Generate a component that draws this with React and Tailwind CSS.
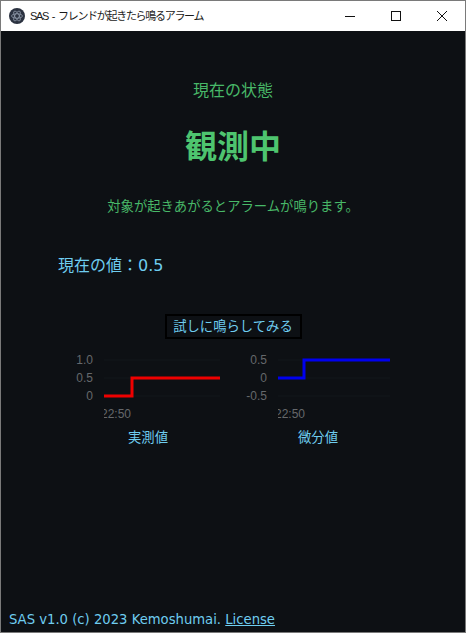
import React from "react";

const jp = "font-['DejaVu_Sans','Noto_Sans_CJK_JP',sans-serif]";

const Chart = ({ ticks, color, tickX, startX, stepX, endX, low, high, label }) => (
  <div className="w-[170px] flex flex-col items-center">
    <svg width="170" height="72" viewBox="0 0 170 72" className="block">
      <defs>
        <clipPath id={`clip-${color}`}>
          <rect x={startX} y="44" width="60" height="24" />
        </clipPath>
      </defs>
      {[0, 18, 36].map((y) => (
        <line key={y} x1={startX} x2={endX} y1={y + 9} y2={y + 9} stroke="#13161a" strokeWidth="1" />
      ))}
      {ticks.map((t, i) => (
        <text key={t} x={tickX} y={13 + i * 18} textAnchor="end" fill="#65686b" fontSize="12" fontFamily="'Liberation Sans', sans-serif">
          {t}
        </text>
      ))}
      <polyline
        points={`${startX},${low} ${stepX},${low} ${stepX},${high} ${endX},${high}`}
        fill="none"
        stroke={color}
        strokeWidth="3"
      />
      <g clipPath={`url(#clip-${color})`}>
        <text x={startX + 12} y="67" textAnchor="middle" fill="#65686b" fontSize="12" fontFamily="'Liberation Sans', sans-serif">
          22:50
        </text>
      </g>
    </svg>
    <p className="text-[13.33px] leading-[18px] mt-[6px] pl-[6px] text-[#6fcdf0]">{label}</p>
  </div>
);

export default function App() {
  return (
    <div className={`w-[466px] h-[633px] flex flex-col border border-[#7a7a7a] bg-[#0d1014] overflow-hidden ${jp}`}>
      {/* TITLE BAR */}
      <div className="h-[30px] shrink-0 bg-white flex items-center pl-[8px]">
        <svg width="16" height="16" viewBox="0 0 16 16" className="shrink-0">
          <circle cx="8" cy="8" r="8" fill="#2b3240" />
          <g fill="none" stroke="#9aa5b5" strokeWidth="0.7">
            <ellipse cx="8" cy="8" rx="5.5" ry="2.2" />
            <ellipse cx="8" cy="8" rx="5.5" ry="2.2" transform="rotate(60 8 8)" />
            <ellipse cx="8" cy="8" rx="5.5" ry="2.2" transform="rotate(120 8 8)" />
          </g>
        </svg>
        <span className="ml-[5px] text-[11px] tracking-[-1.3px] [word-spacing:2px] text-[#1a1a1a] font-['Liberation_Sans','Noto_Sans_CJK_JP',sans-serif]">
          SAS - フレンドが起きたら鳴るアラーム
        </span>
        <div className="ml-auto flex items-center h-full text-black">
          <div className="w-[46px] flex justify-center">
            <svg width="10" height="10" viewBox="0 0 10 10"><path d="M0 5.5H10" stroke="#111" /></svg>
          </div>
          <div className="w-[46px] flex justify-center">
            <svg width="10" height="10" viewBox="0 0 10 10"><rect x="0.5" y="0.5" width="9" height="9" fill="none" stroke="#111" /></svg>
          </div>
          <div className="w-[46px] flex justify-center">
            <svg width="10" height="10" viewBox="0 0 10 10"><path d="M0 0L10 10M10 0L0 10" stroke="#111" /></svg>
          </div>
        </div>
      </div>

      {/* STATUS */}
      <div className="flex-1 flex flex-col items-center pt-[48px]">
        <p className="text-[16px] leading-[24px] text-[#48b868]">現在の状態</p>
        <h1 className="mt-[24px] text-[32px] leading-[40px] font-bold text-[#4ec46f]">観測中</h1>
        <p className="mt-[30px] text-[13.33px] leading-[20px] text-[#48b868]">対象が起きあがるとアラームが鳴ります。</p>
        <p className="self-start ml-[57px] mt-[37px] text-[16px] leading-[24px] text-[#6fcdf0]">現在の値：0.5</p>

        <button className="mt-[36px] w-[137px] h-[25px] border-2 border-black bg-[#0d1014] text-[13.33px] leading-none text-[#6fcdf0]">
          試しに鳴らしてみる
        </button>

        <div className="mt-[12px] flex -translate-x-[3px]">
          <Chart ticks={["1.0", "0.5", "0"]} color="#ee0000" tickX="33" startX={44} stepX={72} endX={160} low={45} high={27} label="実測値" />
          <Chart ticks={["0.5", "0", "-0.5"]} color="#0000ee" tickX="37" startX={48} stepX={74} endX={160} low={27} high={9} label="微分値" />
        </div>
      </div>

      {/* FOOTER */}
      <p className="pl-[8px] pb-[3px] text-[13.2px] leading-[18px] text-[#6fcdf0]">
        SAS v1.0 (c) 2023 Kemoshumai. <a className="underline">License</a>
      </p>
    </div>
  );
}
